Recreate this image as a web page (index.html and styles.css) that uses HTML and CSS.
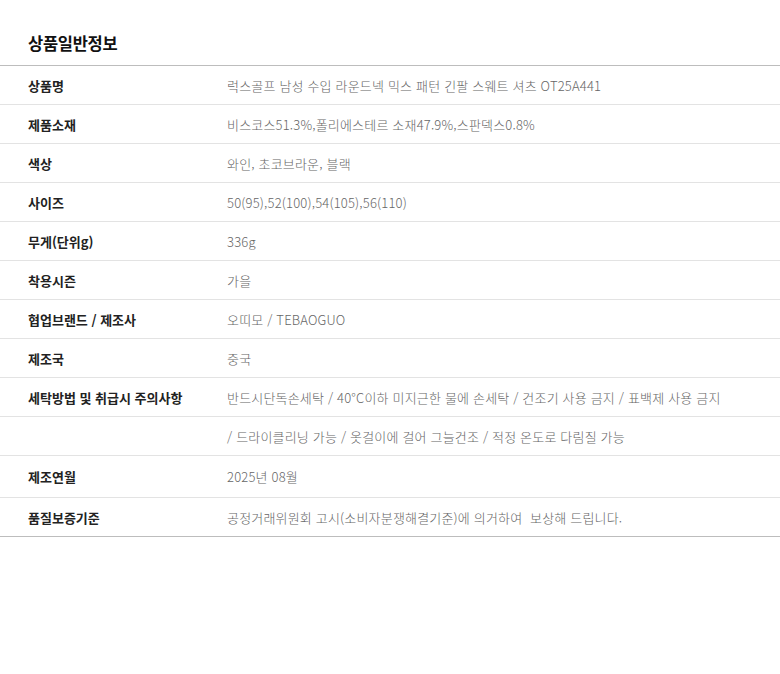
FILE: index.html
```html
<!DOCTYPE html>
<html lang="ko">
<head>
<meta charset="utf-8">
<link rel="stylesheet" href="styles.css">
</head>
<body>
<div class="wrap">
  <h2 class="title">상품일반정보</h2>
  <table class="info">
    <tbody>
      <tr><th>상품명</th><td>럭스골프 남성 수입 라운드넥 믹스 패턴 긴팔 스웨트 셔츠 OT25A441</td></tr>
      <tr><th>제품소재</th><td>비스코스51.3%,폴리에스테르 소재47.9%,스판덱스0.8%</td></tr>
      <tr><th>색상</th><td>와인, 초코브라운, 블랙</td></tr>
      <tr><th>사이즈</th><td>50(95),52(100),54(105),56(110)</td></tr>
      <tr><th>무게(단위g)</th><td>336g</td></tr>
      <tr><th>착용시즌</th><td>가을</td></tr>
      <tr><th>협업브랜드 / 제조사</th><td>오띠모 / TEBAOGUO</td></tr>
      <tr><th>제조국</th><td>중국</td></tr>
      <tr><th>세탁방법 및 취급시 주의사항</th><td>반드시단독손세탁 / 40°C이하 미지근한 물에 손세탁 / 건조기 사용 금지 / 표백제 사용 금지</td></tr>
      <tr><th></th><td>/ 드라이클리닝 가능 / 옷걸이에 걸어 그늘건조 / 적정 온도로 다림질 가능</td></tr>
      <tr class="tall"><th>제조연월</th><td>2025년 08월</td></tr>
      <tr><th>품질보증기준</th><td>공정거래위원회 고시(소비자분쟁해결기준)에 의거하여&nbsp; 보상해 드립니다.</td></tr>
    </tbody>
  </table>
</div>
</body>
</html>
```
FILE: styles.css
```css
html, body {
  margin: 0;
  padding: 0;
  background: #fff;
}
body {
  font-family: "Noto Sans CJK KR", "Noto Sans", sans-serif;
  color: #222;
}
.wrap {
  padding-top: 30px;
}
.title {
  margin: 0 0 0 28px;
  font-size: 16.5px;
  font-weight: 700;
  line-height: 26px;
  height: 35px;
  color: #111;
  letter-spacing: -0.3px;
}
.info {
  width: 100%;
  border-collapse: collapse;
  border-top: 1px solid #bdbdbd;
  border-bottom: 1px solid #bdbdbd;
}
.info th,
.info td {
  height: 38px;
  padding: 0;
  border-bottom: 1px solid #e3e3e3;
  font-size: 13px;
  vertical-align: middle;
  text-align: left;
}
.info tr:last-child th,
.info tr:last-child td {
  border-bottom: none;
}
.info th {
  width: 199px;
  padding-left: 28px;
  font-weight: 700;
  color: #222;
}
.info td {
  color: #666;
  font-weight: 300;
  letter-spacing: 0.18px;
}
.info tr.tall th,
.info tr.tall td {
  height: 41px;
}
```
